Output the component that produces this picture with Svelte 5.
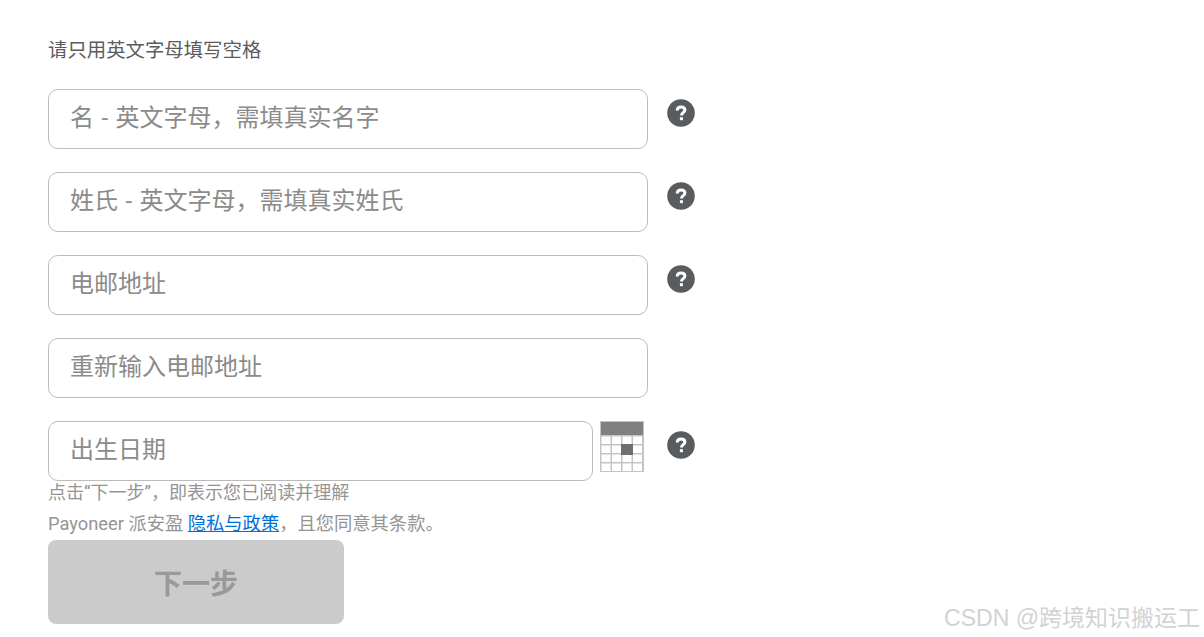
<script>
	let fields = [
		{ placeholder: '名 - 英文字母，需填真实名字', help: true },
		{ placeholder: '姓氏 - 英文字母，需填真实姓氏', help: true },
		{ placeholder: '电邮地址', help: true },
		{ placeholder: '重新输入电邮地址', help: false }
	];
	let cells = [];
	for (let r = 0; r < 4; r++) {
		for (let c = 0; c < 4; c++) {
			cells.push({ x: 1.5 + c * 10.5, y: 15.5 + r * 9 });
		}
	}
</script>

{#snippet helpIcon()}
	<svg class="help" width="28" height="28" viewBox="0 0 28 28" aria-label="帮助">
		<circle cx="14" cy="14" r="13.8" fill="#585c5e" />
		<path d="M10.2 11.6c0-2.4 1.6-3.7 3.9-3.7 2.2 0 3.8 1.2 3.8 3.1 0 1.4-.8 2.1-1.8 2.8-1 .7-1.5 1.2-1.5 2.3v.4" fill="none" stroke="#fff" stroke-width="3" />
		<rect x="12.9" y="18.2" width="3" height="3" fill="#fff" />
	</svg>
{/snippet}

<main class="page">
	<p class="intro">请只用英文字母填写空格</p>

	<div class="fields">
		{#each fields as field}
			<div class="row">
				<input class="field" type="text" placeholder={field.placeholder} />
				{#if field.help}
					{@render helpIcon()}
				{/if}
			</div>
		{/each}

		<div class="row">
			<input class="field date" type="text" placeholder="出生日期" />
			<svg class="calendar" width="44" height="51" viewBox="0 0 44 51" aria-label="日历">
				<rect width="44" height="51" fill="#c4c4c4" />
				<rect x="1" y="1" width="42" height="13" fill="#808080" />
				{#each cells as cell}
					<rect x={cell.x} y={cell.y} width="9" height="7.5" fill="#fff" />
				{/each}
				<rect x="21" y="23" width="12" height="11" fill="#6e6e6e" />
			</svg>
			{@render helpIcon()}
		</div>
	</div>

	<p class="note first">点击“下一步”，即表示您已阅读并理解</p>
	<p class="note second">Payoneer 派安盈 <a href="#privacy">隐私与政策</a>，且您同意其条款。</p>

	<button class="next" type="button" disabled>下一步</button>
</main>

<div class="watermark">CSDN @跨境知识搬运工</div>

<style>
	:global(body) {
		background: #fff;
		overflow: hidden;
	}
	.page {
		padding: 39px 0 0 48px;
		font-family: "Roboto", "Noto Sans CJK SC", sans-serif;
	}
	.intro {
		margin: 0 0 27px;
		font-size: 19.4px;
		line-height: 23px;
		color: #5c5c5c;
	}
	.fields {
		display: flex;
		flex-direction: column;
		gap: 23px;
	}
	.row {
		display: flex;
		align-items: flex-start;
		width: 648px;
		position: relative;
	}
	.field {
		box-sizing: border-box;
		width: 600px;
		height: 60px;
		padding: 0 21px 2px;
		border: 1px solid #bbb;
		border-radius: 10px;
		background: #fff;
		font-family: inherit;
		font-size: 24px;
		word-spacing: 1.5px;
		outline: none;
	}
	.field::placeholder {
		color: #8b8b8b;
		opacity: 1;
	}
	.field.date {
		width: 545px;
	}
	.calendar {
		margin-left: 7px;
		flex: none;
	}
	.help {
		position: absolute;
		left: 619px;
		top: 10px;
	}
	.note {
		margin: 0;
		font-size: 18.05px;
		line-height: 24px;
		color: #949494;
	}
	.note.second {
		margin-top: 7px;
		margin-bottom: 4px;
		font-size: 18.3px;
	}
	.note a {
		color: #0070d8;
		text-decoration: underline;
	}
	.next {
		display: block;
		width: 296px;
		height: 84px;
		padding: 0;
		border: none;
		border-radius: 8px;
		background: #cbcbcb;
		color: #999;
		font-family: inherit;
		font-size: 28px;
		font-weight: 700;
	}
	.watermark {
		position: absolute;
		right: 4px;
		top: 604px;
		font-family: "Liberation Sans", "Noto Sans CJK SC", sans-serif;
		font-size: 23px;
		line-height: 28px;
		color: #d2d2d2;
		white-space: nowrap;
	}
</style>
